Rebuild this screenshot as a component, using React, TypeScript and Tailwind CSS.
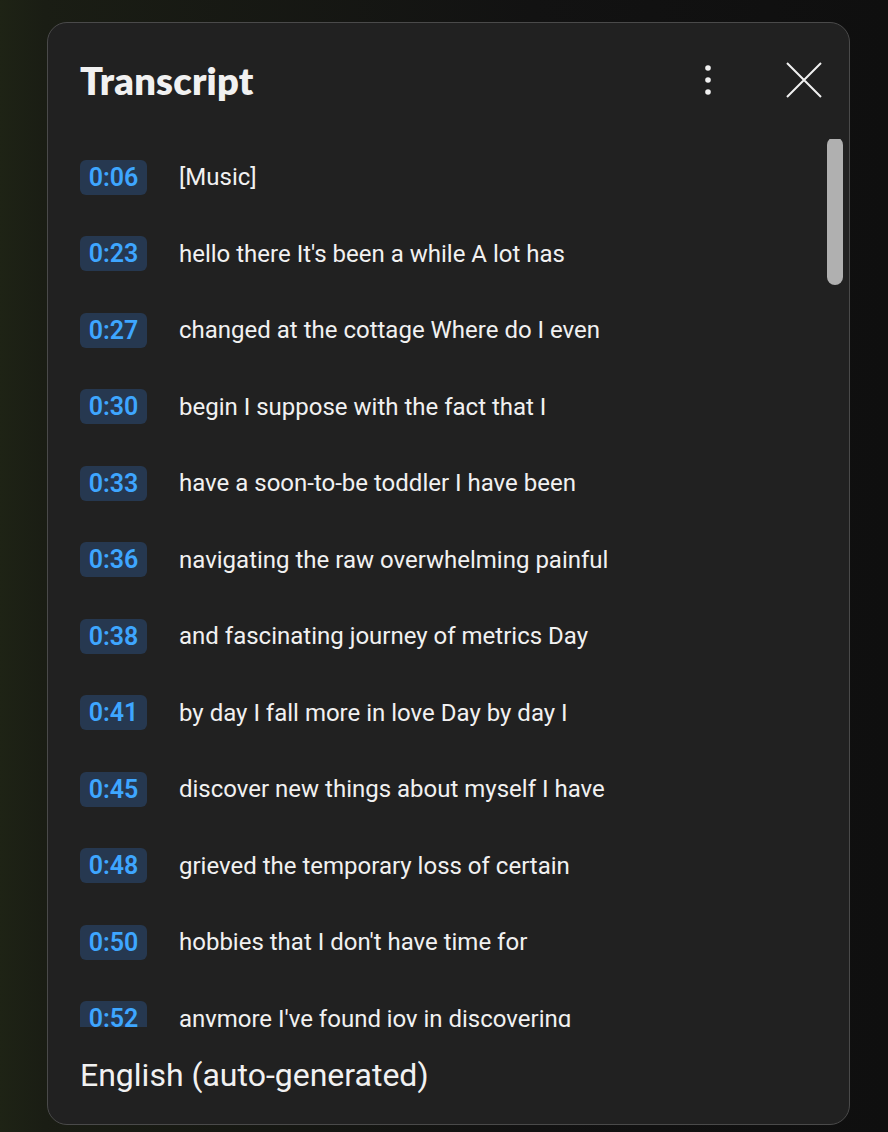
const rows: [string, string][] = [
  ["0:06", "[Music]"],
  ["0:23", "hello there It's been a while A lot has"],
  ["0:27", "changed at the cottage Where do I even"],
  ["0:30", "begin I suppose with the fact that I"],
  ["0:33", "have a soon-to-be toddler I have been"],
  ["0:36", "navigating the raw overwhelming painful"],
  ["0:38", "and fascinating journey of metrics Day"],
  ["0:41", "by day I fall more in love Day by day I"],
  ["0:45", "discover new things about myself I have"],
  ["0:48", "grieved the temporary loss of certain"],
  ["0:50", "hobbies that I don't have time for"],
  ["0:52", "anymore I've found joy in discovering"],
];

export default function App() {
  return (
    <div
      className="w-[888px] h-[1132px] overflow-hidden pt-[22px] pl-[47px] bg-[linear-gradient(90deg,#1e2315_0%,#1a1d14_5%,#121212_60%,#0f0f0f_100%)]"
      style={{ fontFamily: "Roboto, 'Liberation Sans', sans-serif" }}
    >
      <div className="w-[803px] h-[1103px] rounded-[20px] border border-[#4a4a4a] bg-[#212121] flex flex-col overflow-hidden">
        {/* Header */}
        <div className="h-[116px] shrink-0 flex items-start pl-[32px] pr-[26px] pt-[33px]">
          <h1
            className="text-[38px] leading-[48px] font-extrabold text-[#f1f1f1] tracking-[0.2px]"
            style={{ fontFamily: "Lato, 'Open Sans', sans-serif" }}
          >
            Transcript
          </h1>
          <div className="ml-auto flex items-center gap-[73px] mt-[5px]">
            <svg width="8" height="32" viewBox="0 0 8 32">
              <circle cx="4" cy="4" r="2.8" fill="#f1f1f1" />
              <circle cx="4" cy="16" r="2.8" fill="#f1f1f1" />
              <circle cx="4" cy="28" r="2.8" fill="#f1f1f1" />
            </svg>
            <svg width="38" height="38" viewBox="0 0 38 38">
              <path d="M2 2 L36 36 M36 2 L2 36" stroke="#f1f1f1" strokeWidth="2" />
            </svg>
          </div>
        </div>

        {/* List */}
        <div className="relative h-[888px] shrink-0 overflow-hidden">
          <div className="flex flex-col">
            {rows.map(([t, text]) => (
              <div key={t} className="h-[76.5px] shrink-0 flex items-center pl-[32px]">
                <span className="w-[67px] h-[35px] rounded-[6px] bg-[#263850] text-[#3ea6ff] text-[25px] font-semibold flex items-center justify-center">
                  {t}
                </span>
                <span className="ml-[32px] text-[24px] text-[#f1f1f1]">{text}</span>
              </div>
            ))}
          </div>
          <div className="absolute right-[6px] top-[-2px] w-[16px] h-[148px] rounded-full bg-[#b0b0b0]" />
        </div>

        {/* Footer */}
        <div className="flex-1 flex items-center pl-[32px]">
          <span className="text-[32px] text-[#f1f1f1] pb-[2px]">English (auto-generated)</span>
        </div>
      </div>
    </div>
  );
}
